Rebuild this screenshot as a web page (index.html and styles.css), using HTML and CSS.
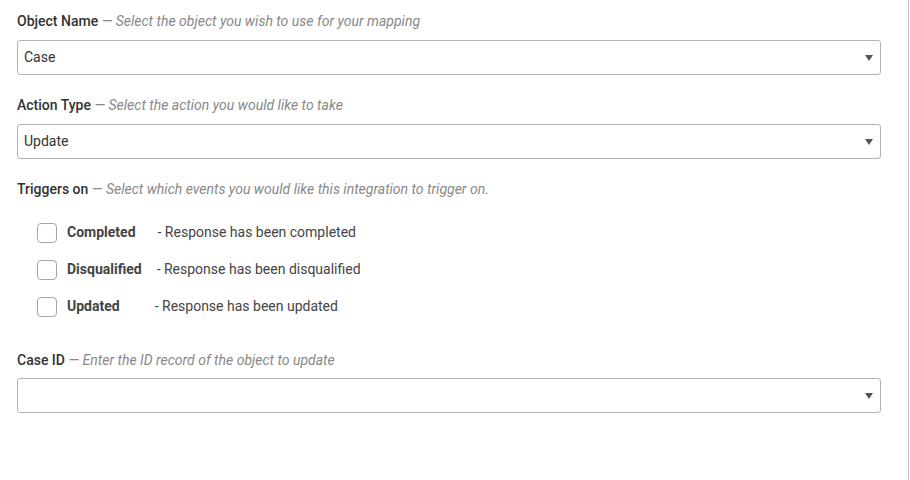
FILE: index.html
```html
<!DOCTYPE html>
<html>
<head>
<meta charset="utf-8">
<link rel="stylesheet" href="styles.css">
</head>
<body>
<div class="panel">
  <div class="field">
    <div class="label"><span class="name">Object Name</span> <span class="hint">— Select the object you wish to use for your mapping</span></div>
    <div class="select"><span class="value">Case</span><svg class="arrow" width="8" height="6" viewBox="0 0 8 6"><path d="M0 0H8L4 6Z" fill="#555"/></svg></div>
  </div>
  <div class="field">
    <div class="label"><span class="name">Action Type</span> <span class="hint">— Select the action you would like to take</span></div>
    <div class="select"><span class="value">Update</span><svg class="arrow" width="8" height="6" viewBox="0 0 8 6"><path d="M0 0H8L4 6Z" fill="#555"/></svg></div>
  </div>
  <div class="field triggers">
    <div class="label"><span class="name">Triggers on</span> <span class="hint">— Select which events you would like this integration to trigger on.</span></div>
    <ul class="checks">
      <li class="check"><span class="box"></span><span class="ev ev-completed">Completed</span><span class="desc">- Response has been completed</span></li>
      <li class="check"><span class="box"></span><span class="ev ev-disq">Disqualified</span><span class="desc">- Response has been disqualified</span></li>
      <li class="check"><span class="box"></span><span class="ev ev-updated">Updated</span><span class="desc">- Response has been updated</span></li>
    </ul>
  </div>
  <div class="field last">
    <div class="label"><span class="name">Case ID</span> <span class="hint">— Enter the ID record of the object to update</span></div>
    <div class="select"><span class="value"></span><svg class="arrow" width="8" height="6" viewBox="0 0 8 6"><path d="M0 0H8L4 6Z" fill="#555"/></svg></div>
  </div>
</div>
</body>
</html>
```
FILE: styles.css
```css
html, body {
  margin: 0;
  padding: 0;
  background: #fff;
}
body {
  font-family: Roboto, "Liberation Sans", sans-serif;
  font-size: 14px;
  color: #333;
}
.panel {
  box-sizing: border-box;
  width: 909px;
  height: 480px;
  border-right: 1px solid #c4c4c4;
  padding: 13px 27px 0 17px;
}
.field {
  margin-bottom: 22px;
}
.label {
  line-height: 16px;
  margin-bottom: 11px;
  white-space: nowrap;
}
.last .label {
  margin-bottom: 10px;
}
.name {
  font-weight: 500;
  color: #333;
}
.hint {
  font-style: italic;
  color: #888;
}
.select {
  box-sizing: border-box;
  height: 35px;
  border: 1px solid #b3b3b3;
  border-radius: 3px;
  display: flex;
  align-items: center;
  justify-content: space-between;
  padding: 0 7px 0 6px;
  color: #333;
}
.value {
  line-height: 16px;
  padding-bottom: 2px;
}
.arrow {
  display: block;
}
.checks {
  list-style: none;
  margin: 26px 0 0 0;
  padding: 0 0 0 20px;
  display: flex;
  flex-direction: column;
  gap: 17px;
}
.check {
  display: flex;
  align-items: center;
  height: 20px;
}
.box {
  box-sizing: border-box;
  width: 20px;
  height: 20px;
  border: 1px solid #a6a6a6;
  border-radius: 4px;
  margin-right: 10px;
  flex: none;
}
.ev,
.desc {
  line-height: 16px;
  padding-bottom: 2px;
  color: #444;
}
.ev {
  font-weight: 700;
}
.ev-completed { margin-right: 22px; }
.ev-disq { margin-right: 15px; }
.ev-updated { margin-right: 35px; }
.triggers {
  margin-bottom: 35px;
}
```
